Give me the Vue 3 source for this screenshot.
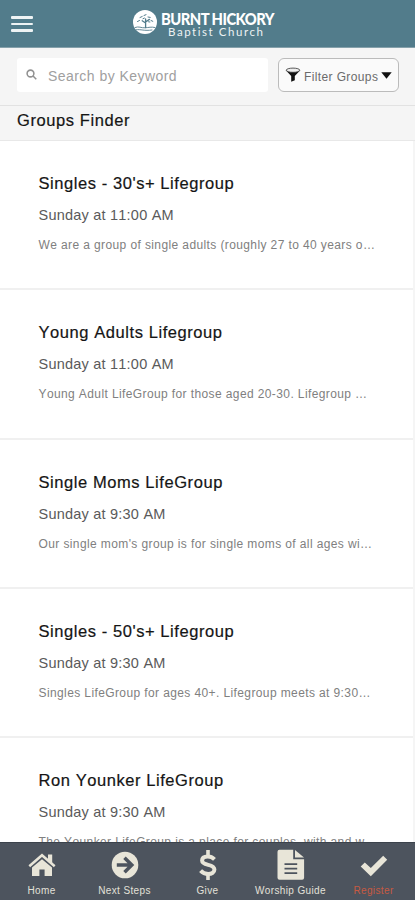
<script setup>
const groups = [
  { name: "Singles - 30's+ Lifegroup", time: 'Sunday at 11:00 AM', text: 'We are a group of single adults (roughly 27 to 40 years o…' },
  { name: 'Young Adults Lifegroup', time: 'Sunday at 11:00 AM', text: 'Young Adult LifeGroup for those aged 20-30. Lifegroup …' },
  { name: 'Single Moms LifeGroup', time: 'Sunday at 9:30 AM', text: "Our single mom's group is for single moms of all ages wi…" },
  { name: "Singles - 50's+ Lifegroup", time: 'Sunday at 9:30 AM', text: 'Singles LifeGroup for ages 40+. Lifegroup meets at 9:30…' },
  { name: 'Ron Younker LifeGroup', time: 'Sunday at 9:30 AM', text: 'The Younker LifeGroup is a place for couples, with and w…' },
]
const tabs = [
  { id: 'home', label: 'Home' },
  { id: 'next', label: 'Next Steps' },
  { id: 'give', label: 'Give' },
  { id: 'guide', label: 'Worship Guide' },
  { id: 'register', label: 'Register', active: true },
]
</script>

<template>
  <div class="screen">
    <header class="top">
      <button class="menu" aria-label="Menu"><i></i><i></i><i></i></button>
      <div class="brand">
        <svg class="emblem" viewBox="0 0 26 26">
          <circle cx="13" cy="13" r="12" fill="#fff" />
          <g fill="none" stroke="#527c8b" stroke-linecap="round">
            <path d="M13.6 18.5V10M13.6 14l-3.4-2.2M13.6 13l3.8-2.6" stroke-width="1.3" />
            <path d="M5.5 12.5l2-1M8 8.5l2.2-1M12 6.5l2-.8M16 8l2.2.4M19 11.5l1.8.8M11 9.7l1.4-.6M16.5 12.8l1.4.2" stroke-width="1" />
            <path d="M3 18.5c4-1.6 6 .6 10 .3 4-.2 6-1.200 10-.3M4 20.800c5-.8 8 1.400 16 .2" stroke-width=".9" />
          </g>
        </svg>
        <div class="words">
          <div class="name">BURNT HICKORY</div>
          <div class="sub">Baptist Church</div>
        </div>
      </div>
    </header>

    <section class="search">
      <div class="field">
        <svg class="lens" viewBox="0 0 12 12" fill="none" stroke="#929292" stroke-width="1.7">
          <circle cx="4.900" cy="4.900" r="3.700" />
          <path d="M7.700 7.700l3.500 3.500" />
        </svg>
        <span>Search by Keyword</span>
      </div>
      <button class="filter">
        <svg class="funnel" viewBox="0 0 16 16">
          <path d="M1 3.500L6.200 9v5.800l3.600-1.600V9L15 3.500z" fill="#111" />
          <ellipse cx="8" cy="3.200" rx="6.800" ry="2.100" fill="#eee" stroke="#333" stroke-width=".8" />
        </svg>
        <span>Filter Groups</span>
        <svg class="caret" viewBox="0 0 11 7"><path d="M.3.300h10.400L5.500 6.800z" fill="#111" /></svg>
      </button>
    </section>

    <h1>Groups Finder</h1>

    <main>
      <article v-for="g in groups" :key="g.name">
        <h2>{{ g.name }}</h2>
        <p class="time">{{ g.time }}</p>
        <p class="text">{{ g.text }}</p>
      </article>
    </main>

    <nav>
      <a v-for="t in tabs" :key="t.id" :class="{ active: t.active }">
        <svg viewBox="0 0 32 32" fill="#e8e5d8">
          <g v-if="t.id === 'home'">
            <path d="M16 10.200l10 8.400V27h-7.400v-6.500h-5.200V27H6v-8.400z" />
            <path d="M3.300 17.200L16 6.200l12.700 11" fill="none" stroke="#e8e5d8" stroke-width="2.500" />
            <path d="M22 5.500h4.200v9.500L22 11.300z" />
          </g>
          <g v-else-if="t.id === 'next'">
            <circle cx="16" cy="16" r="13.300" />
            <path d="M7.800 16h14M15.500 8.700l7.300 7.300-7.300 7.300" fill="none" stroke="#4d545e" stroke-width="3.500" />
          </g>
          <g v-else-if="t.id === 'give'" fill="none" stroke="#e8e5d8">
            <path d="M22.500 10.300c-2-2-4.200-2.800-6.800-2.800-3.400 0-5.600 1.500-5.600 4 0 6 12.300 2.700 12.300 9 0 2.800-2.500 4.400-6.200 4.400-3.200 0-5.700-1.200-7.600-3.300" stroke-width="4" />
            <path d="M16 1v6M16 25v6" stroke-width="3.600" />
          </g>
          <g v-else-if="t.id === 'guide'">
            <path d="M4.500.700h13.700v9.600h10.900v18.500a2 2 0 0 1-2 2H4.500a2 2 0 0 1-2-2V2.700a2 2 0 0 1 2-2z" />
            <path d="M20 .9l9 7.700h-9z" />
            <path d="M9.500 15.200h12.700M9.500 19.700h12.700M9.500 24.200h12.700" stroke="#4d545e" stroke-width="1.700" />
          </g>
          <path v-else d="M2.700 17.500l4.100-4.100 6 5.700L25.200 6.700l4 4.100-16.400 16.500z" />
        </svg>
        <span>{{ t.label }}</span>
      </a>
    </nav>
  </div>
</template>

<style>
body { margin: 0; overflow: hidden; }
</style>

<style scoped>
.screen {
  width: 415px;
  height: 900px;
  display: flex;
  flex-direction: column;
  overflow: hidden;
  background: #f5f5f5;
  font-family: "Liberation Sans", Arial, sans-serif;
  font-kerning: none;
}
* { box-sizing: border-box; }
svg { display: block; flex: none; }
button { border: 0; background: none; padding: 0; font: inherit; }
.top {
  flex: none;
  height: 48px;
  display: flex;
  align-items: flex-start;
  padding-left: 11px;
  background: #527c8b;
  border-bottom: 1px solid #86a1ab;
}
.menu { width: 22px; margin-top: 16px; display: flex; flex-direction: column; gap: 4px; }
.menu i { height: 2.500px; background: #eef3f4; border-radius: 1px; }
.brand { display: flex; margin-left: 99px; padding-top: 9px; }
.emblem { width: 26px; height: 26px; }
.words { margin: 1px 0 0 3px; color: #fff; font-family: Lato, sans-serif; white-space: nowrap; font-kerning: normal; }
.name {
  font-size: 16px;
  line-height: 17px;
  font-weight: 900;
  letter-spacing: -.6px;
  transform: scaleX(.925);
  transform-origin: left;
}
.sub { padding-left: 7px; font-size: 11.500px; line-height: 9px; letter-spacing: 1.550px; color: #edf2f3; }
.search {
  flex: none;
  height: 58px;
  padding: 10px 16px 0 17px;
  display: flex;
  align-items: flex-start;
  justify-content: space-between;
  border-bottom: 1px solid #e2e2e2;
}
.field {
  width: 251px;
  height: 34px;
  display: flex;
  align-items: center;
  gap: 11px;
  padding: 2px 0 0 9px;
  background: #fff;
  border-radius: 3px;
  color: #a0a0a0;
  font-size: 14px;
  letter-spacing: .45px;
}
.lens { width: 11px; height: 11px; margin-top: -3px; }
.filter {
  width: 121px;
  height: 34px;
  display: flex;
  align-items: center;
  padding: 3px 0 0 6px;
  border: 1px solid #bbb;
  border-radius: 6px;
  background: #fafafa;
  color: #6b6b6b;
  font-size: 12px;
  letter-spacing: .38px;
  white-space: nowrap;
}
.funnel { width: 16px; height: 16px; margin: -3px 3px 0 0; }
.caret { width: 11px; height: 7px; margin: -3px 0 0 3px; }
h1 {
  flex: none;
  height: 35px;
  margin: 0;
  padding-left: 17px;
  font-size: 16.500px;
  line-height: 29px;
  font-weight: 400;
  letter-spacing: .58px;
  color: #151515;
  -webkit-text-stroke: .2px #151515;
  border-bottom: 1px solid #e8e8e8;
}
main { flex: 1; min-height: 0; overflow: hidden; margin-right: 2px; background: #fff; }
article { height: 149.250px; padding: 32px 0 0 38.500px; border-bottom: 2px solid #f0f0f0; white-space: nowrap; }
h2 {
  margin: 0;
  font-size: 16.500px;
  line-height: 20px;
  font-weight: 400;
  letter-spacing: .57px;
  color: #151515;
  -webkit-text-stroke: .2px #151515;
}
p { margin: 0; }
.time { margin-top: 13px; font-size: 14.500px; line-height: 18px; letter-spacing: .22px; color: #5a5a5a; }
.text { margin-top: 13px; font-size: 12px; line-height: 16px; letter-spacing: .39px; color: #808080; }
nav {
  flex: none;
  height: 58px;
  display: grid;
  grid-template-columns: repeat(5, 83px);
  background: #4d545e;
  border-top: 1px solid #3c434c;
}
nav a { display: flex; flex-direction: column; align-items: center; gap: 3px; padding-top: 6px; color: #e3e1d9; }
nav svg { width: 32px; height: 32px; }
nav span { font-size: 10px; line-height: 14px; letter-spacing: .37px; white-space: nowrap; }
nav .active { color: #c75a42; }
</style>
